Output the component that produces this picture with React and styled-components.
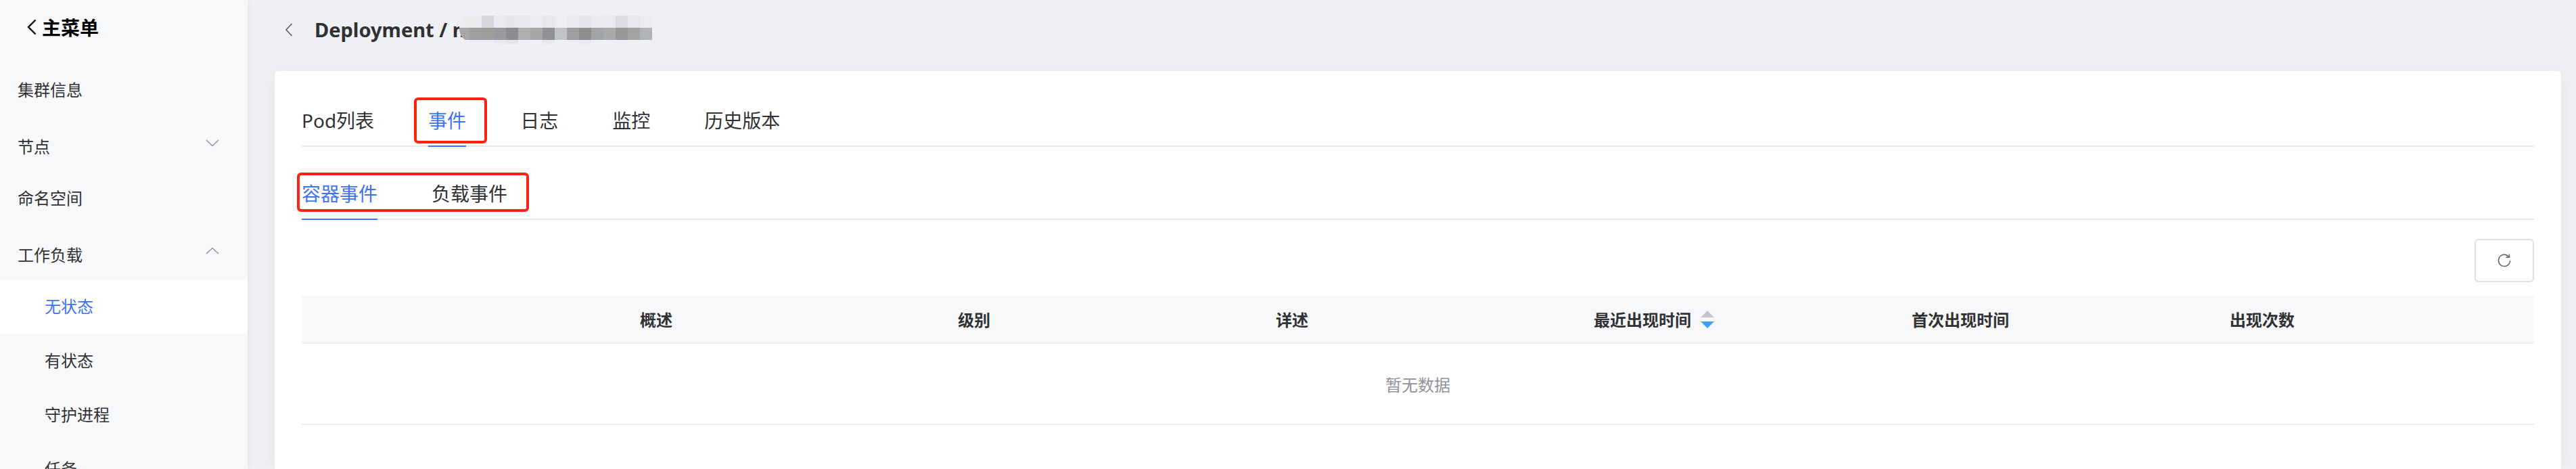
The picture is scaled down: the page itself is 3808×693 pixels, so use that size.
import React, { useState } from "react";
import styled, { createGlobalStyle, css } from "styled-components";

const menu = [
  { label: "集群信息" },
  { label: "节点", group: true },
  { label: "命名空间" },
  { label: "工作负载", group: true, open: true },
  { label: "无状态", child: true },
  { label: "有状态", child: true },
  { label: "守护进程", child: true },
  { label: "任务", child: true },
];

const mainTabs = ["Pod列表", "事件", "日志", "监控", "历史版本"];
const eventTabs = ["容器事件", "负载事件"];

const columns = [
  { label: "概述" },
  { label: "级别" },
  { label: "详述" },
  { label: "最近出现时间", sortable: true },
  { label: "首次出现时间" },
  { label: "出现次数" },
];

// colours of the blocks that hide the deployment name
const maskRows = [
  {
    y: 0,
    height: 18,
    colors: [
      "#ebecee", "#eaebed", "#d7d8dc", "#e9eaee", "#e6e7ea", "#e7e8eb",
      "#ebecf0", "#e7e8ec", "#eeeff2", "#e9eaed", "#e6e7ea", "#eaebef",
      "#e9eaee", "#dcdde1", "#e7e8eb", "#ebecef",
    ],
  },
  {
    y: 18,
    height: 18,
    colors: [
      "#a6a7a7", "#9d9ea0", "#9d9d9c", "#99999f", "#8d8c90", "#afb1b0",
      "#a5a7a6", "#909196", "#bfc3c6", "#9d9ea0", "#8e8e8d", "#9fa4a6",
      "#a9a9ac", "#979799", "#a3a3a2", "#b0b4ba",
    ],
  },
  {
    y: 36,
    height: 6,
    colors: [
      null, null, null, "#e8eaed", "#e4e7ea", null, null, "#e7e9ec",
      null, null, "#e8eaed", null, null, null, null, null,
    ],
  },
];

const NameMask = () => (
  <MaskSvg width="288" height="42" viewBox="0 0 288 42" aria-hidden="true">
    <clipPath id="mask-edge">
      <path d="M12 0H288V42H12V36C6 33 3 26 3 18C3 10 6 3 12 0Z" />
    </clipPath>
    <g clipPath="url(#mask-edge)" shapeRendering="crispEdges">
      {maskRows.map((row) =>
        row.colors.map(
          (color, i) =>
            color && (
              <rect
                key={`${row.y}-${i}`}
                x={i * 18}
                y={row.y}
                width="18"
                height={row.height}
                fill={color}
              />
            )
        )
      )}
    </g>
  </MaskSvg>
);

const App = () => {
  const [page, setPage] = useState("无状态");
  const [mainTab, setMainTab] = useState("事件");
  const [eventTab, setEventTab] = useState("容器事件");

  return (
    <>
      <GlobalStyle />
      <Shell>
        <Sidebar>
          <MenuTitle type="button">
            <svg width="14" height="24" viewBox="0 0 14 24" fill="none">
              <path d="M12.5 1.5L2 12L12.5 22.5" stroke="#000" strokeWidth="2.4" />
            </svg>
            主菜单
          </MenuTitle>
          <nav>
            {menu.map((item) => (
              <MenuItem
                key={item.label}
                href="#"
                $group={item.group}
                $child={item.child}
                $active={item.label === page}
                onClick={() => item.child && setPage(item.label)}
              >
                {item.label}
                {item.group && (
                  <svg width="20" height="24" viewBox="0 0 20 24" fill="none">
                    <path
                      d={item.open ? "M1 12L10 3.5L19 12" : "M1 4L10 12.5L19 4"}
                      stroke="#909399"
                      strokeWidth="1.5"
                    />
                  </svg>
                )}
              </MenuItem>
            ))}
          </nav>
        </Sidebar>
        <Main>
          <PageHeader>
            <BackButton type="button" aria-label="返回">
              <svg width="12" height="20" viewBox="0 0 12 20" fill="none">
                <path d="M10.5 1L2 10L10.5 19" stroke="#53585f" strokeWidth="1.5" />
              </svg>
            </BackButton>
            <PageTitle>Deployment / n</PageTitle>
            <NameMask />
          </PageHeader>
          <Card>
            <Tabs>
              {mainTabs.map((tab) => (
                <Tab
                  key={tab}
                  type="button"
                  $active={tab === mainTab}
                  onClick={() => setMainTab(tab)}
                >
                  {tab}
                  {tab === "事件" && <TabMark />}
                </Tab>
              ))}
            </Tabs>
            <Tabs>
              {eventTabs.map((tab) => (
                <Tab
                  key={tab}
                  type="button"
                  $active={tab === eventTab}
                  onClick={() => setEventTab(tab)}
                >
                  {tab}
                </Tab>
              ))}
              <GroupMark />
            </Tabs>
            <Toolbar>
              <RefreshButton type="button" aria-label="刷新">
                <svg width="22" height="22" viewBox="0 0 22 22" fill="none">
                  <path
                    d="M19.6 11A8.6 8.6 0 1 1 17.6 5.4"
                    stroke="#606266"
                    strokeWidth="1.5"
                  />
                  <path d="M18.3 1.6V6.2H13.4" stroke="#606266" strokeWidth="1.5" />
                </svg>
              </RefreshButton>
            </Toolbar>
            <Table>
              <colgroup>
                <FirstCol />
                {columns.map((col) => (
                  <col key={col.label} />
                ))}
              </colgroup>
              <thead>
                <tr>
                  <HeadCell as="td" />
                  {columns.map((col) => (
                    <HeadCell key={col.label} scope="col">
                      <HeadLabel>
                        {col.label}
                        {col.sortable && (
                          <button type="button" aria-label="排序">
                            <svg width="20" height="26" viewBox="0 0 20 26">
                              <path d="M10 0L20 10H0Z" fill="#c0c4cc" />
                              <path d="M0 16H20L10 26Z" fill="#409eff" />
                            </svg>
                          </button>
                        )}
                      </HeadLabel>
                    </HeadCell>
                  ))}
                </tr>
              </thead>
              <tbody>
                <tr>
                  <EmptyCell colSpan={columns.length + 1}>暂无数据</EmptyCell>
                </tr>
              </tbody>
            </Table>
          </Card>
        </Main>
      </Shell>
    </>
  );
};

const GlobalStyle = createGlobalStyle`
  * {
    box-sizing: border-box;
  }

  body {
    margin: 0;
    background: #eff0f4;
    color: #303133;
    font-family: "Noto Sans", "Noto Sans CJK SC", sans-serif;
    font-size: 24px;
  }

  button {
    border: none;
    padding: 0;
    background: none;
    color: inherit;
    font: inherit;
    cursor: pointer;
  }

  svg {
    display: block;
    flex: none;
  }
`;

const Shell = styled.div`
  display: flex;
  height: 100vh;
  overflow: hidden;
`;

const Sidebar = styled.aside`
  flex: none;
  width: 366px;
  overflow: hidden;
  background: #f7f8fa;
  box-shadow: 0 0 12px rgba(0, 0, 0, 0.06);
`;

const MenuTitle = styled.button`
  display: flex;
  align-items: center;
  gap: 8px;
  height: 93px;
  padding: 0 0 14px 40px;
  color: #000;
  font-size: 28px;
  font-weight: 700;
`;

const MenuItem = styled.a`
  display: flex;
  align-items: center;
  justify-content: space-between;
  height: 80px;
  padding: ${({ $group }) => ($group ? "8px" : "0")} 42px 4px
    ${({ $child }) => ($child ? "66px" : "26px")};
  background: ${({ $active }) => ($active ? "#fff" : "transparent")};
  color: ${({ $active }) => ($active ? "#3d73f5" : "#303133")};
  text-decoration: none;
`;

const Main = styled.main`
  display: flex;
  flex: 1;
  flex-direction: column;
  min-width: 0;
  padding: 0 22px 0 40px;
`;

const PageHeader = styled.header`
  display: flex;
  flex: none;
  align-items: center;
  height: 105px;
  padding: 0 0 18px 15px;
`;

const BackButton = styled.button`
  margin-right: 32px;
`;

const PageTitle = styled.h1`
  margin: 0;
  font-size: 29px;
  font-weight: 700;
  line-height: 40px;
`;

const MaskSvg = styled.svg`
  margin-left: -12px;
`;

const Card = styled.section`
  flex: 1;
  padding: 32px 40px 0;
  border-radius: 6px 6px 0 0;
  background: #fff;
  box-shadow: 0 4px 24px rgba(0, 0, 0, 0.06);
`;

const Tabs = styled.div`
  position: relative;
  display: flex;
  gap: 80px;
  height: 80px;
  border-bottom: 2px solid #e4e7ed;

  & + & {
    margin-top: 28px;
  }
`;

const Tab = styled.button`
  position: relative;
  height: 80px;
  padding-top: 2px;
  border-bottom: 2px solid transparent;
  font-size: 28px;

  ${({ $active }) =>
    $active &&
    css`
      border-color: #3d73f5;
      color: #3d73f5;
    `}
`;

// red frames drawn over the tabs
const Mark = styled.span`
  position: absolute;
  border: 4px solid #ff2212;
  border-radius: 6px;
  pointer-events: none;
`;

const TabMark = styled(Mark)`
  inset: 7px -31px 3px -21px;
`;

const GroupMark = styled(Mark)`
  top: 10px;
  left: -7px;
  width: 343px;
  height: 58px;
`;

const Toolbar = styled.div`
  display: flex;
  justify-content: flex-end;
  padding: 28px 0 20px;
`;

const RefreshButton = styled.button`
  display: flex;
  align-items: center;
  justify-content: center;
  width: 88px;
  height: 64px;
  border: 2px solid #dcdfe6;
  border-radius: 6px;
  background: #fff;
`;

const Table = styled.table`
  width: 100%;
  border-collapse: separate;
  border-spacing: 0;
  table-layout: fixed;
`;

const FirstCol = styled.col`
  width: 480px;
`;

const HeadCell = styled.th`
  height: 71px;
  padding: 0 20px;
  border-bottom: 2px solid #ebeef5;
  background: #f7f8fa;
  font-weight: 700;
  text-align: left;
`;

const HeadLabel = styled.div`
  display: flex;
  align-items: center;
  gap: 14px;
`;

const EmptyCell = styled.td`
  height: 120px;
  padding: 0;
  border-bottom: 2px solid #ebeef5;
  color: #909399;
  text-align: center;
`;

export default App;
